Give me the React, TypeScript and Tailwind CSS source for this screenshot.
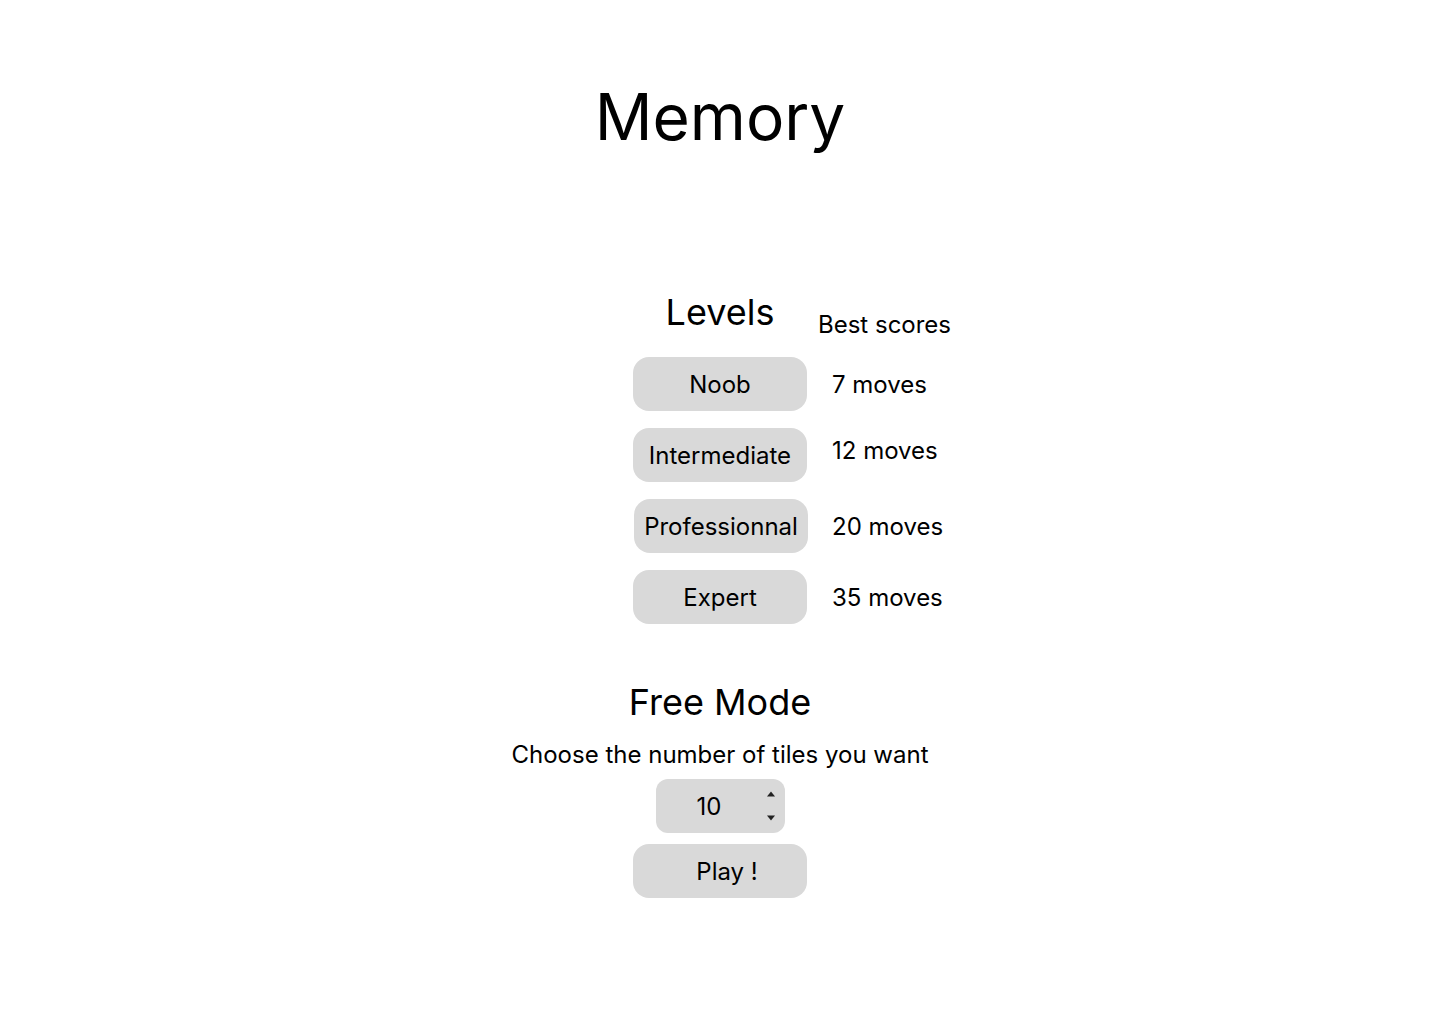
import React from 'react'

const levels = [
  { name: 'Noob', score: '7 moves', offset: 'pt-0', shift: '' },
  { name: 'Intermediate', score: '12 moves', offset: 'pb-[10px]', shift: '' },
  { name: 'Professionnal', score: '20 moves', offset: 'pt-0', shift: 'translate-x-[1px]' },
  { name: 'Expert', score: '35 moves', offset: 'pt-0', shift: '' },
]

function Spinner() {
  return (
    <div className="flex flex-col items-center gap-[18px]">
      <svg width="10" height="6" viewBox="0 0 10 6">
        <path d="M5 0.5 L9 5.5 L1 5.5 Z" fill="#222" />
      </svg>
      <svg width="10" height="6" viewBox="0 0 10 6">
        <path d="M1 0.5 L9 0.5 L5 5.5 Z" fill="#222" />
      </svg>
    </div>
  )
}

export default function App() {
  return (
    <div
      className="min-h-[1024px] w-full bg-white text-black"
      style={{ fontFamily: 'Inter, "Noto Sans", sans-serif' }}
    >
      <h1 className="pt-[78px] text-center text-[64px] leading-[77px] font-normal">Memory</h1>

      <section className="mt-[135px] flex flex-col gap-[17px]">
        {/* Header row */}
        <div className="grid grid-cols-[1fr_174px_1fr] items-end">
          <div />
          <h2 className="pb-[6px] text-center text-[36px] leading-[44px]">Levels</h2>
          <div className="pl-[11px] pb-[1px] text-[24px] leading-[29px]">Best scores</div>
        </div>

        {levels.map((l) => (
          <div key={l.name} className="grid grid-cols-[1fr_174px_1fr] items-center">
            <div />
            <button
              className={`h-[54px] w-[174px] rounded-[16px] bg-[#d9d9d9] text-[24px] leading-[29px] text-black ${l.shift}`}
            >
              {l.name}
            </button>
            <div className={`pl-[25px] text-[24px] leading-[29px] ${l.offset}`}>{l.score}</div>
          </div>
        ))}
      </section>

      <section className="mt-[56px] flex flex-col items-center">
        <h2 className="text-center text-[36px] leading-[44px]">Free Mode</h2>
        <p className="mt-[16px] text-center text-[24px] leading-[29px]">Choose the number of tiles you want</p>
        <div className="mt-[10px] flex h-[54px] w-[129px] items-center rounded-[12px] bg-[#d9d9d9] pl-[41px] pr-[9px]">
          <span className="flex-1 text-[24px] leading-[29px]">10</span>
          <Spinner />
        </div>
        <button className="mt-[11px] h-[54px] w-[174px] rounded-[16px] bg-[#d9d9d9] pl-[14px] text-[24px] leading-[29px]">
          Play !
        </button>
      </section>
    </div>
  )
}
